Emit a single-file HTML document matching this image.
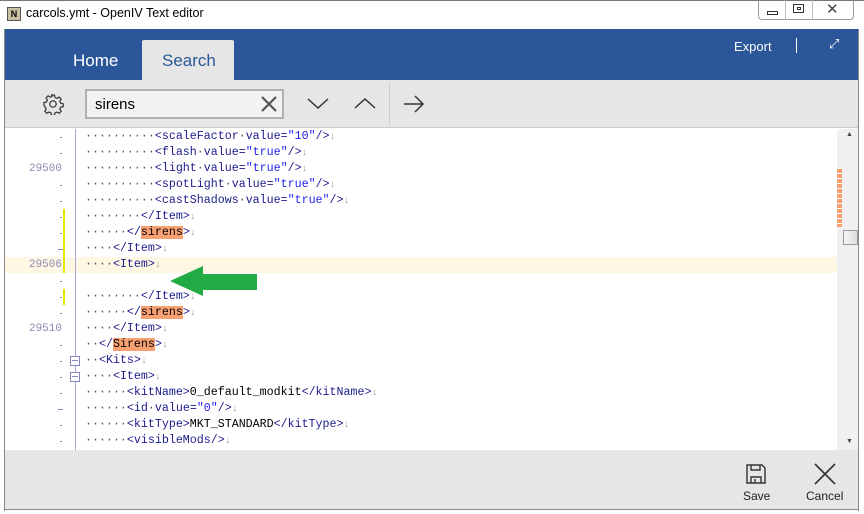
<!DOCTYPE html>
<html><head><meta charset="utf-8"><style>
*{margin:0;padding:0;box-sizing:border-box}
body{width:864px;height:514px;background:#fff;position:relative;overflow:hidden;font-family:"Liberation Sans",sans-serif}
.abs{position:absolute}
.title{left:26px;top:6px;font-size:12.5px;color:#000}
.hdr{left:5px;top:29px;width:853px;height:51px;background:#2b579a}
.tb{left:5px;top:80px;width:853px;height:48px;background:#e6e6e6;border-bottom:1px solid #ccc}
.ed{left:5px;top:129px;width:853px;height:321px;background:#fff}
.ft{left:5px;top:450px;width:853px;height:60px;background:#e6e6e6;border-bottom:1px solid #888}
.row{position:absolute;left:85px;height:16px;line-height:16px;font-family:"Liberation Mono",monospace;font-size:11.65px;white-space:pre;color:#1c1c8c}
.d{color:#555}
.v{color:#2222ee}
.h{background:#f8a070;color:#000}
.ar{color:#999;font-size:10px}
.ln{position:absolute;right:802px;width:60px;text-align:right;font-family:"Liberation Mono",monospace;font-size:11px;color:#8a8ab0;height:16px;line-height:16px}
.gd{position:absolute;left:60px;width:2px;height:1px;background:#8a8ab0}
</style></head><body>
<div class="abs" style="left:0;top:0;width:864px;height:1px;background:#777"></div>
<div class="abs" style="left:7px;top:7px;width:14px;height:14px;background:#c8c0a0;border:1px solid #555;font-size:9px;font-weight:bold;text-align:center;line-height:12px">N</div>
<div class="abs title">carcols.ymt - OpenIV Text editor</div>
<div class="abs" style="left:758px;top:0;width:96px;height:20px;border:1px solid #999;border-top:none;border-radius:0 0 4px 4px"></div>
<div class="abs" style="left:785px;top:0;width:1px;height:20px;background:#bbb"></div>
<div class="abs" style="left:812px;top:0;width:1px;height:20px;background:#bbb"></div>
<div class="abs" style="left:767px;top:11px;width:11px;height:4px;border:1px solid #333"></div>
<div class="abs" style="left:793px;top:4px;width:11px;height:9px;border:1px solid #333"></div>
<div class="abs" style="left:797px;top:7px;width:4px;height:3px;border:1px solid #333"></div>
<div class="abs" style="left:826px;top:0px;font-size:15px;color:#444">✕</div>
<div class="abs" style="left:4px;top:29px;width:1px;height:482px;background:#888"></div>
<div class="abs" style="left:858px;top:29px;width:1px;height:482px;background:#888"></div>
<div class="abs hdr"></div>
<div class="abs" style="left:73px;top:51px;color:#fff;font-size:17px">Home</div>
<div class="abs" style="left:142px;top:40px;width:92px;height:41px;background:#e6e6e6;border-radius:2px 2px 0 0"></div>
<div class="abs" style="left:162px;top:51px;color:#2b579a;font-size:17px">Search</div>
<div class="abs" style="left:734px;top:39px;color:#fff;font-size:13px">Export</div>
<div class="abs" style="left:796px;top:38px;width:1px;height:15px;background:#fff"></div>
<div class="abs" style="left:829px;top:36px;color:#fff;font-size:13px">⤢</div>
<div class="abs tb"></div>
<svg class="abs" style="left:42px;top:93px" width="22" height="22" viewBox="0 0 22 22"><g fill="none" stroke="#333" stroke-width="1.2"><circle cx="11" cy="11" r="3.2"/><path d="M9.5 2h3l.5 2.5 2 .9 2.1-1.4 2.1 2.1-1.4 2.1.9 2 2.5.5v3l-2.5.5-.9 2 1.4 2.1-2.1 2.1-2.1-1.4-2 .9-.5 2.5h-3l-.5-2.5-2-.9-2.1 1.4-2.1-2.1 1.4-2.1-.9-2L2 12.5v-3l2.5-.5.9-2L4 4.9 6.1 2.8l2.1 1.4 2-.9z"/></g></svg>
<div class="abs" style="left:85px;top:89px;width:199px;height:30px;border:2px solid #b0b0b0;background:#f2f2f2"></div>
<div class="abs" style="left:95px;top:96px;font-size:15px;color:#000">sirens</div>
<svg class="abs" style="left:260px;top:95px" width="18" height="18"><path d="M2 2L16 16M16 2L2 16" stroke="#555" stroke-width="2.2"/></svg>
<svg class="abs" style="left:306px;top:96px" width="24" height="14"><path d="M2 3L12 12L22 3" fill="none" stroke="#333" stroke-width="1.5"/></svg>
<svg class="abs" style="left:353px;top:96px" width="24" height="14"><path d="M2 12L12 3L22 12" fill="none" stroke="#333" stroke-width="1.5"/></svg>
<div class="abs" style="left:389px;top:82px;width:1px;height:44px;background:#ccc"></div>
<svg class="abs" style="left:402px;top:94px" width="24" height="20"><path d="M2 10H21M13 2L21 10L13 18" fill="none" stroke="#333" stroke-width="1.5"/></svg>
<div class="abs ed"></div>
<div class="abs" style="left:5px;top:257px;width:832px;height:16px;background:#fdf7e4"></div>
<div class="abs" style="left:75px;top:129px;width:1px;height:321px;background:#a8a8d8"></div>
<div class="abs" style="left:63px;top:209px;width:2px;height:64px;background:#e8e800"></div>
<div class="abs" style="left:63px;top:289px;width:2px;height:16px;background:#e8e800"></div>
<div class="gd" style="top:137px"></div><div class="gd" style="top:153px"></div>
<div class="gd" style="top:185px"></div><div class="gd" style="top:201px"></div>
<div class="gd" style="top:217px"></div><div class="gd" style="top:233px"></div>
<div class="gd" style="top:249px;left:58px;width:5px"></div><div class="gd" style="top:281px"></div>
<div class="gd" style="top:297px"></div><div class="gd" style="top:313px"></div>
<div class="gd" style="top:345px"></div><div class="gd" style="top:361px"></div>
<div class="gd" style="top:377px"></div><div class="gd" style="top:393px"></div>
<div class="gd" style="top:409px;left:58px;width:5px"></div><div class="gd" style="top:425px"></div>
<div class="gd" style="top:441px"></div>
<div class="abs" style="left:837px;top:129px;width:21px;height:321px;background:#f0f0f0"></div>
<div class="abs" style="left:837px;top:169px;width:5px;height:58px;background:repeating-linear-gradient(#f8a070 0 4px,#fff 4px 5px)"></div>
<div class="abs" style="left:843px;top:230px;width:15px;height:15px;border:1px solid #999;background:linear-gradient(90deg,#f5f5f5,#ddd)"></div>
<div class="abs" style="left:846px;top:131px;font-size:7px;color:#444">▲</div>
<div class="abs" style="left:846px;top:438px;font-size:7px;color:#444">▼</div>
<div class="ln" style="top:161px">29500</div>
<div class="ln" style="top:257px">29506</div>
<div class="ln" style="top:321px">29510</div>
<div class="abs" style="left:70px;top:356px;width:10px;height:10px;border:1px solid #8888c0;background:#fff"></div>
<div class="abs" style="left:72px;top:360px;width:6px;height:1px;background:#8888c0"></div>
<div class="abs" style="left:70px;top:372px;width:10px;height:10px;border:1px solid #8888c0;background:#fff"></div>
<div class="abs" style="left:72px;top:376px;width:6px;height:1px;background:#8888c0"></div>
<svg class="abs" style="left:165px;top:264px" width="95" height="34"><path d="M5 17L38 2V10H92V26H38V32Z" fill="#22aa44"/></svg>
<div class="row" style="top:129px"><span class="d">··········</span>&lt;scaleFactor<span class="d">·</span>value=<span class="v">"10"</span>/&gt;<span class="ar">↓</span></div>
<div class="row" style="top:145px"><span class="d">··········</span>&lt;flash<span class="d">·</span>value=<span class="v">"true"</span>/&gt;<span class="ar">↓</span></div>
<div class="row" style="top:161px"><span class="d">··········</span>&lt;light<span class="d">·</span>value=<span class="v">"true"</span>/&gt;<span class="ar">↓</span></div>
<div class="row" style="top:177px"><span class="d">··········</span>&lt;spotLight<span class="d">·</span>value=<span class="v">"true"</span>/&gt;<span class="ar">↓</span></div>
<div class="row" style="top:193px"><span class="d">··········</span>&lt;castShadows<span class="d">·</span>value=<span class="v">"true"</span>/&gt;<span class="ar">↓</span></div>
<div class="row" style="top:209px"><span class="d">········</span>&lt;/Item&gt;<span class="ar">↓</span></div>
<div class="row" style="top:225px"><span class="d">······</span>&lt;/<span class="h">sirens</span>&gt;<span class="ar">↓</span></div>
<div class="row" style="top:241px"><span class="d">····</span>&lt;/Item&gt;<span class="ar">↓</span></div>
<div class="row" style="top:257px"><span class="d">····</span>&lt;Item&gt;<span class="ar">↓</span></div>
<div class="row" style="top:289px"><span class="d">········</span>&lt;/Item&gt;<span class="ar">↓</span></div>
<div class="row" style="top:305px"><span class="d">······</span>&lt;/<span class="h">sirens</span>&gt;<span class="ar">↓</span></div>
<div class="row" style="top:321px"><span class="d">····</span>&lt;/Item&gt;<span class="ar">↓</span></div>
<div class="row" style="top:337px"><span class="d">··</span>&lt;/<span class="h">Sirens</span>&gt;<span class="ar">↓</span></div>
<div class="row" style="top:353px"><span class="d">··</span>&lt;Kits&gt;<span class="ar">↓</span></div>
<div class="row" style="top:369px"><span class="d">····</span>&lt;Item&gt;<span class="ar">↓</span></div>
<div class="row" style="top:385px"><span class="d">······</span>&lt;kitName&gt;<span style="color:#000">0_default_modkit</span>&lt;/kitName&gt;<span class="ar">↓</span></div>
<div class="row" style="top:401px"><span class="d">······</span>&lt;id<span class="d">·</span>value=<span class="v">"0"</span>/&gt;<span class="ar">↓</span></div>
<div class="row" style="top:417px"><span class="d">······</span>&lt;kitType&gt;<span style="color:#000">MKT_STANDARD</span>&lt;/kitType&gt;<span class="ar">↓</span></div>
<div class="row" style="top:433px"><span class="d">······</span>&lt;visibleMods/&gt;<span class="ar">↓</span></div>
<div class="abs ft"></div>
<svg class="abs" style="left:745px;top:463px" width="22" height="22"><path d="M2 2H17L20 5V20H2Z M6 20V14H16V20 M6 2V7H15V2 M10 16V20" fill="none" stroke="#333" stroke-width="1.4"/></svg>
<div class="abs" style="left:743px;top:489px;font-size:12px;color:#222">Save</div>
<svg class="abs" style="left:813px;top:462px" width="24" height="24"><path d="M2 2L22 22M22 2L2 22" stroke="#333" stroke-width="1.6"/></svg>
<div class="abs" style="left:806px;top:489px;font-size:12px;color:#222">Cancel</div>
</body></html>
